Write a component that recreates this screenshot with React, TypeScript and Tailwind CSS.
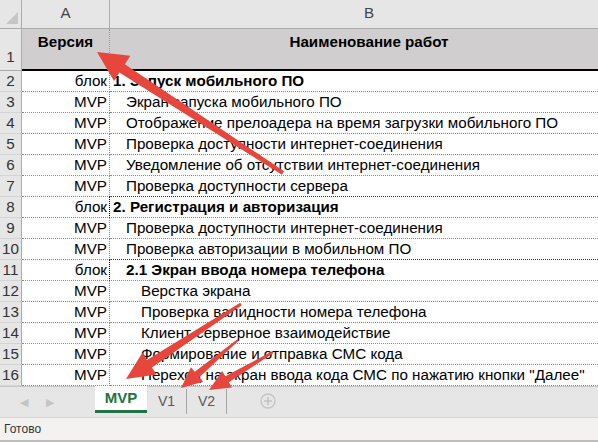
import React from "react";

type Row = { n: number; a: string; b: string; bold?: boolean; indent: 0 | 1 | 2; box?: boolean };

const rows: Row[] = [
  { n: 2, a: "блок", b: "1. Запуск мобильного ПО", bold: true, indent: 0 },
  { n: 3, a: "MVP", b: "Экран запуска мобильного ПО", indent: 1 },
  { n: 4, a: "MVP", b: "Отображение прелоадера на время загрузки мобильного ПО", indent: 1 },
  { n: 5, a: "MVP", b: "Проверка доступности интернет-соединения", indent: 1 },
  { n: 6, a: "MVP", b: "Уведомление об отсутствии интернет-соединения", indent: 1 },
  { n: 7, a: "MVP", b: "Проверка доступности сервера", indent: 1 },
  { n: 8, a: "блок", b: "2. Регистрация и авторизация", bold: true, indent: 0, box: true },
  { n: 9, a: "MVP", b: "Проверка доступности интернет-соединения", indent: 1 },
  { n: 10, a: "MVP", b: "Проверка авторизации в мобильном ПО", indent: 1 },
  { n: 11, a: "блок", b: "2.1 Экран ввода номера телефона", bold: true, indent: 1, box: true },
  { n: 12, a: "MVP", b: "Верстка экрана", indent: 2 },
  { n: 13, a: "MVP", b: "Проверка валидности номера телефона", indent: 2 },
  { n: 14, a: "MVP", b: "Клиент-серверное взаимодействие", indent: 2 },
  { n: 15, a: "MVP", b: "Формирование и отправка СМС кода", indent: 2 },
  { n: 16, a: "MVP", b: "Переход на экран ввода кода СМС по нажатию кнопки \"Далее\"", indent: 2 },
];

function arrow(tail: [number, number], tip: [number, number], headW: number, headL: number, shaftW0: number, shaftW1: number) {
  const dx = tip[0] - tail[0];
  const dy = tip[1] - tail[1];
  const len = Math.hypot(dx, dy);
  const ux = dx / len;
  const uy = dy / len;
  const px = -uy;
  const py = ux;
  const bx = tip[0] - ux * headL;
  const by = tip[1] - uy * headL;
  const p = (x: number, y: number) => `${x.toFixed(1)},${y.toFixed(1)}`;
  return [
    p(tail[0] + px * shaftW0 / 2, tail[1] + py * shaftW0 / 2),
    p(bx + px * shaftW1 / 2, by + py * shaftW1 / 2),
    p(bx + px * headW / 2, by + py * headW / 2),
    p(tip[0], tip[1]),
    p(bx - px * headW / 2, by - py * headW / 2),
    p(bx - px * shaftW1 / 2, by - py * shaftW1 / 2),
    p(tail[0] - px * shaftW0 / 2, tail[1] - py * shaftW0 / 2),
  ].join(" ");
}

const indentCls = ["pl-[3px]", "pl-[16px]", "pl-[31px]"];

export default function App() {
  return (
    <div
      className="relative w-[598px] h-[442px] overflow-hidden bg-white text-[15.2px] text-black"
      style={{ fontFamily: '"Liberation Sans", Arial, sans-serif' }}
    >
      {/* grid */}
      <div className="grid grid-cols-[22px_88px_518px] w-[628px]">
        {/* column header row */}
        <div className="h-[29px] bg-[#e6e6e6] border-b border-r border-[#ababab] relative">
          <div className="absolute right-[3px] bottom-[4px] w-0 h-0 border-l-[12px] border-l-transparent border-b-[12px] border-b-[#c6c6c6]" />
        </div>
        <div className="h-[29px] bg-[#e6e6e6] border-b border-r border-[#ababab] flex items-end justify-center pb-[3px] text-[#444]">A</div>
        <div className="h-[29px] bg-[#e6e6e6] border-b border-[#ababab] flex items-end justify-center pb-[3px] text-[#444]">B</div>

        {/* row 1 */}
        <div className="h-[42px] bg-[#e6e6e6] border-r border-[#ababab] border-b border-b-[#ababab] flex items-end justify-center pb-[1px] text-[#333]">1</div>
        <div className="h-[42px] bg-[#d0cece] border-b-2 border-solid border-b-black flex">
          <div className="flex-1 flex justify-center pt-[2px] font-bold border-r border-dotted border-r-[#9a9a9a]">Версия</div>
        </div>
        <div className="h-[42px] bg-[#d0cece] border-b-2 border-solid border-b-black flex justify-center pt-[2px] font-bold">Наименование работ</div>

        {rows.map((r) => (
          <React.Fragment key={r.n}>
            <div className="h-[21px] bg-[#e6e6e6] border-r border-[#ababab] border-b border-b-[#d4d4d4] flex items-end justify-center leading-[20px] text-[#333]">
              {r.n}
            </div>
            <div className="h-[21px] border-b border-dotted border-b-[#8a8a8a] border-r border-r-[#8a8a8a] flex items-end justify-end pr-[2px] leading-[20px]">
              {r.a}
            </div>
            <div
              className={`h-[21px] border-b border-dotted border-b-[#8a8a8a] flex items-end leading-[20px] whitespace-nowrap ${indentCls[r.indent]} ${
                r.bold ? "font-bold" : ""
              } ${r.box ? "border-l border-l-black -ml-px border-t border-t-[#333] -mt-px h-[22px]" : ""}`}
            >
              {r.b}
            </div>
          </React.Fragment>
        ))}
      </div>

      {/* tab bar */}
      <div className="h-[31px] bg-[#e6e6e6] border-t border-[#c8c8c8] flex items-stretch text-[14px]">
        <div className="w-[95px] flex items-center text-[#c4c4c4] text-[11px]">
          <span className="ml-[20px]">◀</span>
          <span className="ml-[18px]">▶</span>
        </div>
        <div className="w-[52px] bg-white border-b-[3px] border-[#217346] h-[27px] flex items-center justify-center font-bold text-[15px] text-[#217346] -mt-px">MVP</div>
        <div className="w-[40px] h-[25px] flex items-center justify-center text-[#595959] border-r border-[#a6a6a6] mt-[2px]">V1</div>
        <div className="w-[40px] h-[25px] flex items-center justify-center text-[#595959] border-r border-[#a6a6a6] mt-[2px]">V2</div>
        <div className="flex-1 flex items-center">
          <svg width="16" height="16" viewBox="0 0 16 16" className="ml-[33px] -mt-[2px]">
            <circle cx="8" cy="8" r="7" fill="none" stroke="#c4c4c4" strokeWidth="1.3" />
            <path d="M8 4v8M4 8h8" stroke="#c4c4c4" strokeWidth="1.6" />
          </svg>
        </div>
      </div>

      {/* status bar */}
      <div className="h-[25px] bg-[#f3f2f1] border-t border-[#d6d6d6] border-b-2 border-b-[#bdbdbd] flex items-center pl-[4px] text-[12px] text-[#333]">
        Готово
      </div>

      {/* arrows overlay */}
      <svg className="absolute inset-0 pointer-events-none" width="598" height="442" viewBox="0 0 598 442">
        <polygon points={arrow([283, 173], [97, 52], 30, 30, 4, 10)} fill="#e6463b" />
        <polygon points={arrow([241, 304], [126, 379], 26, 28, 3, 9)} fill="#e6463b" />
        <polygon points={arrow([238, 340], [181, 388], 19, 21, 2, 7)} fill="#e6463b" />
        <polygon points={arrow([273, 352], [209, 390], 19, 21, 2, 7)} fill="#e6463b" />
      </svg>
    </div>
  );
}
